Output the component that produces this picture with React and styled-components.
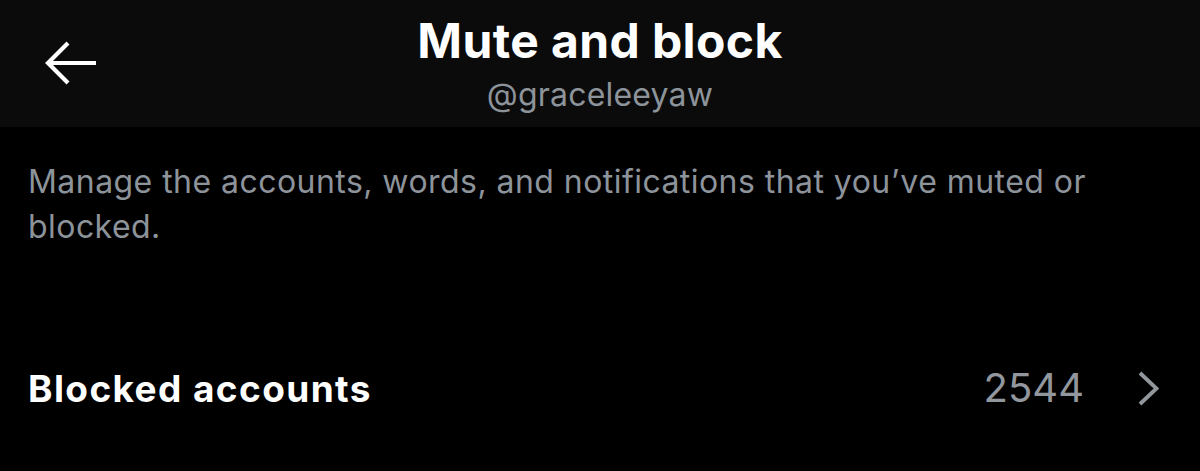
import React from "react";
import styled, { createGlobalStyle } from "styled-components";

const Global = createGlobalStyle`
  html, body {
    margin: 0;
    padding: 0;
    background: #000;
  }
  body {
    font-family: Inter, "Liberation Sans", Arial, sans-serif;
    -webkit-font-smoothing: antialiased;
  }
`;

const Screen = styled.div`
  width: 1200px;
  height: 471px;
  background: #000;
  overflow: hidden;
`;

/* ===== Header ===== */
const Header = styled.header`
  height: 127px;
  background: #0b0b0b;
  display: grid;
  grid-template-columns: 1fr auto 1fr;
  align-items: center;
`;

const BackBtn = styled.button`
  justify-self: start;
  margin-left: 44px;
  width: 54px;
  height: 46px;
  padding: 0;
  border: 0;
  background: transparent;
  display: flex;
  align-items: center;
  justify-content: center;
  cursor: pointer;
`;

const TitleBlock = styled.div`
  display: flex;
  flex-direction: column;
  align-items: center;
`;

const Title = styled.h1`
  margin: 0 0 14px;
  font-size: 48px;
  line-height: 48px;
  font-weight: 700;
  color: #fff;
  letter-spacing: 0.4px;
`;

const Handle = styled.div`
  font-size: 32px;
  line-height: 32px;
  color: #8d939a;
  letter-spacing: 0.2px;
`;

/* ===== Body ===== */
const Description = styled.p`
  margin: 0;
  padding: 32px 28px 0;
  font-size: 32px;
  line-height: 45px;
  color: #8d939a;
  letter-spacing: 0.45px;
`;

const Row = styled.div`
  margin-top: 89px;
  height: 100px;
  padding: 0 41px 0 28px;
  display: flex;
  align-items: center;
  cursor: pointer;
`;

const RowLabel = styled.span`
  flex: 1;
  font-size: 37px;
  line-height: 37px;
  font-weight: 700;
  color: #fff;
  letter-spacing: 1.4px;
`;

const RowCount = styled.span`
  font-size: 40px;
  line-height: 40px;
  color: #92979d;
  margin-right: 54px;
`;

const Chevron = styled.svg`
  width: 21px;
  height: 35px;
  display: block;
`;

export default function App() {
  return (
    <Screen>
      <Global />
      <Header>
        <BackBtn aria-label="back">
          <svg width="54" height="46" viewBox="0 0 54 46" fill="none">
            <path
              d="M4 22H52M24 2L4 22L24 42"
              stroke="#fff"
              strokeWidth="4.2"
              strokeLinecap="butt"
              strokeLinejoin="miter"
            />
          </svg>
        </BackBtn>
        <TitleBlock>
          <Title>Mute and block</Title>
          <Handle>@graceleeyaw</Handle>
        </TitleBlock>
        <div />
      </Header>

      <Description>
        Manage the accounts, words, and notifications that you’ve muted or blocked.
      </Description>

      <Row>
        <RowLabel>Blocked accounts</RowLabel>
        <RowCount>2544</RowCount>
        <Chevron viewBox="0 0 21 35" fill="none">
          <path d="M2 2L18.5 17.5L2 33" stroke="#92979d" strokeWidth="3.8" />
        </Chevron>
      </Row>
    </Screen>
  );
}
